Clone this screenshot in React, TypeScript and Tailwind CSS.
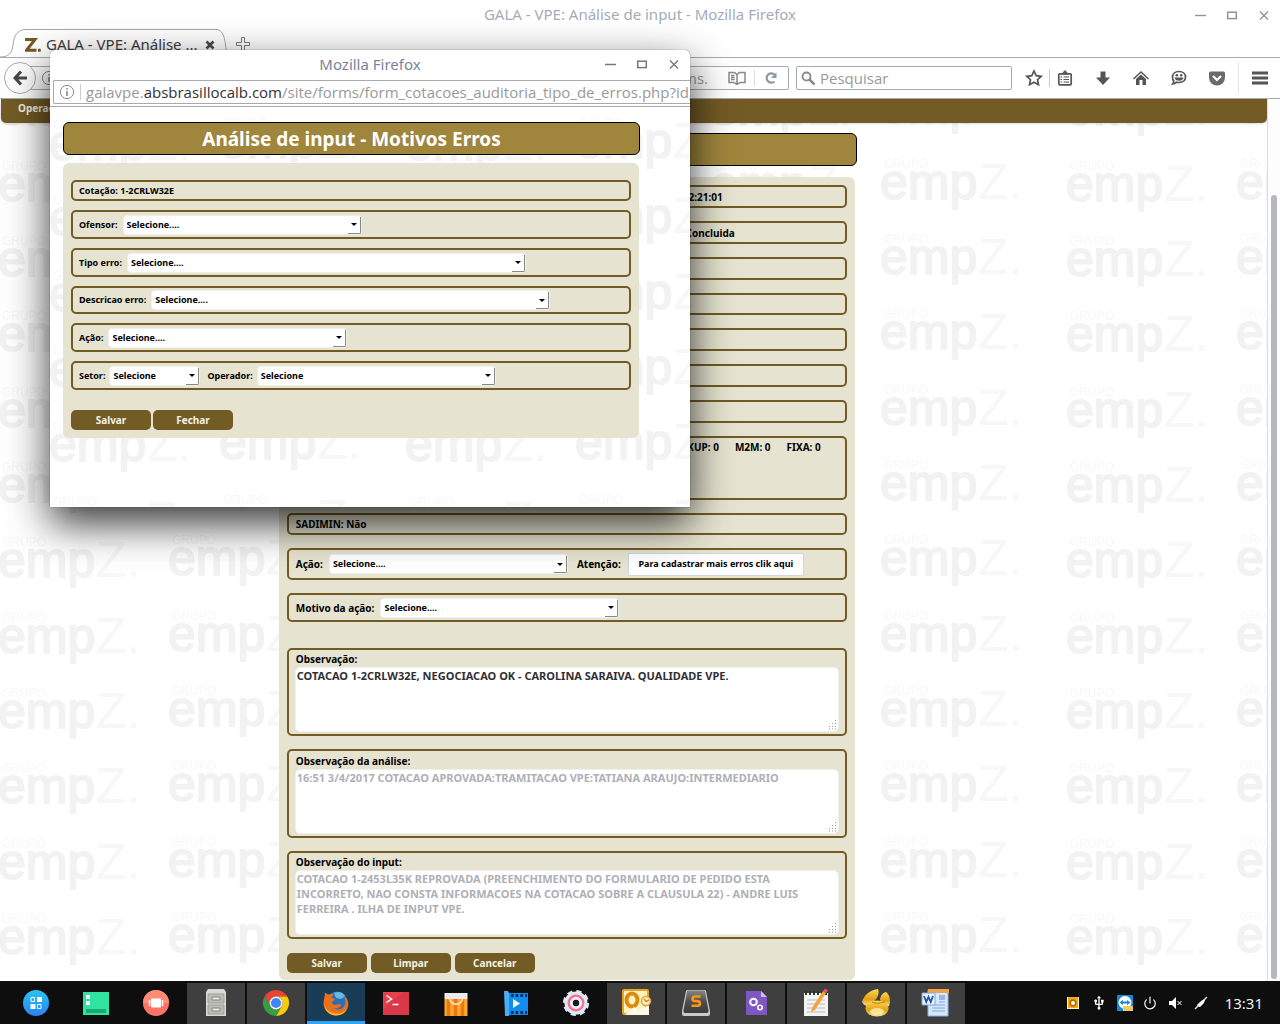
import React, { useId } from "react";
import { MdUsb } from "react-icons/md";
import { Power } from "lucide-react";

function Watermark({ x, y }: { x: number; y: number }) {
  const id = useId();
  const rows = [0, 75, 151];
  const logo = (lx: number, ly: number, key: string) => (
    <g key={key} transform={`translate(${lx} ${ly})`}>
      <text x="3" y="18" fontSize="12" fill="#f7f7f7">GRUPO</text>
      <text x="-1" y="49" fontSize="50" fill="#f2f2f2" stroke="#f2f2f2" strokeWidth="2">emp</text>
      <text x="97" y="49" fontSize="50" fill="#f7f7f7">Z.</text>
    </g>
  );
  return (
    <svg className="absolute inset-0 h-full w-full font-['Liberation_Sans',sans-serif]" aria-hidden="true">
      <defs>
        <pattern id={id} x={x} y={y} width="356" height="226" patternUnits="userSpaceOnUse">
          {rows.map((r) => [logo(11, r, "a" + r), logo(197, r + 2, "b" + r)])}
        </pattern>
      </defs>
      <rect width="100%" height="100%" fill={`url(#${id})`} />
    </svg>
  );
}

function WindowButtons({ tone }: { tone: string }) {
  return (
    <div className={`flex shrink-0 items-center gap-4 ${tone}`}>
      <button aria-label="Minimizar" className="h-4 w-4">
        <svg viewBox="0 0 16 16" className="h-4 w-4"><path d="M3 8.5h11" stroke="currentColor" strokeWidth="1.4" /></svg>
      </button>
      <button aria-label="Maximizar" className="h-4 w-4">
        <svg viewBox="0 0 16 16" className="h-4 w-4"><rect x="3.7" y="5.2" width="8.6" height="6.4" fill="none" stroke="currentColor" strokeWidth="1.5" /></svg>
      </button>
      <button aria-label="Fechar janela" className="h-4 w-4">
        <svg viewBox="0 0 16 16" className="h-4 w-4"><path d="M4 4.5l8 8M12 4.5l-8 8" stroke="currentColor" strokeWidth="1.4" /></svg>
      </button>
    </div>
  );
}

function InfoIcon() {
  return (
    <svg viewBox="0 0 16 16" className="h-4 w-4 shrink-0 text-[#8a8a8a]">
      <circle cx="8" cy="8" r="6.6" fill="none" stroke="currentColor" />
      <path d="M8 7v5M8 4v1.6" stroke="currentColor" strokeWidth="1.6" />
    </svg>
  );
}

function SelectField({ label, value, width, gap }: { label: string; value: string; width: string; gap: string }) {
  const id = useId();
  return (
    <div className={`flex items-center ${gap}`}>
      <label htmlFor={id}>{label}</label>
      <div className={`relative ${width}`}>
        <select id={id} className="h-5 w-full appearance-none rounded-[4px] border border-[#f0f0f0] bg-white pr-4 pl-[3px] text-[9px] leading-4 font-bold">
          <option>{value}</option>
        </select>
        <span className="pointer-events-none absolute right-[1px] bottom-[1px] flex h-[17px] w-[13px] items-center justify-center rounded-br-[2px] border-r border-b border-[#888]">
          <span className="border-x-[3px] border-t-[3px] border-x-transparent border-t-black" />
        </span>
      </div>
    </div>
  );
}

function Row({ height, className = "", children }: { height: string; className?: string; children?: React.ReactNode }) {
  return <div className={`flex rounded-[5px] border-2 border-[#735b25] ${height} ${className}`}>{children}</div>;
}

function NoteField({ label, text, height, disabled = false }: { label: string; text: string; height: string; disabled?: boolean }) {
  const id = useId();
  return (
    <Row height={height} className="flex-col justify-end px-[6px] pb-[2px]">
      <label htmlFor={id} className="h-[15px] pl-px leading-[15px]">{label}</label>
      <div className="relative h-[65px]">
        <textarea
          id={id}
          disabled={disabled}
          defaultValue={text}
          className="h-full w-full resize-none overflow-hidden rounded-[5px] border border-[#f0f0ee] bg-white pl-[1px] text-[11px] leading-[15px] font-bold text-[#303036] disabled:text-[#aeb0b6]"
        />
        <svg viewBox="0 0 10 10" className="pointer-events-none absolute right-[2px] bottom-[2px] h-[10px] w-[10px] text-[#999]">
          <path d="M8 .5h1M8 3.5h1M5 3.5h1M8 6.5h1M5 6.5h1M2 6.5h1M8 9h1M5 9h1M2 9h1M-1 9h1" stroke="currentColor" />
        </svg>
      </div>
    </Row>
  );
}

function ActionButton({ children }: { children: React.ReactNode }) {
  return <button className="h-5 w-20 rounded-[5px] bg-[#735b25] text-[10px] font-bold text-[#f4f2e6]">{children}</button>;
}

function BrowserChrome() {
  return (
    <header className="shrink-0 bg-white">
      <div className="flex h-[29px] items-center pr-2">
        <div className="w-[80px]" />
        <h1 className="flex-1 pl-2 text-center text-[15px] text-[#a5abb9]">GALA - VPE: Análise de input - Mozilla Firefox</h1>
        <WindowButtons tone="text-[#949494]" />
      </div>
      <div className="flex h-7 items-stretch">
        <svg viewBox="0 0 26 28" className="h-7 w-[26px] shrink-0" fill="none" stroke="#a3a7ab"><path d="M0 28c9 0 12-4 13-12 1-9 4-15.5 13-15.5" /></svg>
        <div className="-ml-px flex w-[191px] items-center border-t border-[#a3a7ab] pt-[2px]">
          <svg viewBox="0 0 16 14" className="h-[14px] w-4 shrink-0" fill="none" stroke="#735b25" strokeWidth="3"><path d="M0 1.5h10L1.500 12.300H11.500M13 12.300h2.800" /></svg>
          <span className="flex-1 pl-[5px] text-[15px] whitespace-nowrap text-[#3c3c3c]">GALA - VPE: Análise ...</span>
          <button aria-label="Fechar aba" className="h-3 w-3">
            <svg viewBox="0 0 12 12" className="h-3 w-3"><path d="M2.5 2.5l7 7M9.5 2.5l-7 7" stroke="#4a4a4a" strokeWidth="2.6" /></svg>
          </button>
        </div>
        <svg viewBox="0 0 16 28" className="h-7 w-4 shrink-0" fill="none" stroke="#a3a7ab"><path d="M0 .5c6 0 8.500 6 9.500 15.500 .8 8 3 12 6.500 12" /></svg>
        <button aria-label="Nova aba" className="ml-[3px] flex w-6 items-center pt-[2px]">
          <svg viewBox="0 0 16 16" className="h-4 w-4"><path d="M6.500 1.500h3v5h5v3h-5v5h-3v-5h-5v-3h5z" fill="#fff" stroke="#777" /></svg>
        </button>
      </div>
      <div className="flex h-[42px] items-center border-y border-[#a8abae] pr-[10px] pl-1">
        <button aria-label="Voltar" className="z-[1] flex h-8 w-8 shrink-0 items-center justify-center rounded-full border border-[#a8abae] bg-white">
          <svg viewBox="0 0 16 16" className="h-4 w-4" fill="none" stroke="#4a4a4a" strokeWidth="3"><path d="M9 1.500L3 8l6 6.500M3 8h12" /></svg>
        </button>
        <div className="-ml-2 flex h-6 flex-1 items-center rounded-r-[2px] border border-[#a8abae] pr-[9px] pl-3">
          <InfoIcon />
          <input aria-label="Endereço" readOnly value="galavpe.absbrasillocalb.com/site/forms." className="min-w-0 flex-1 pr-5 text-right font-['Open_Sans',sans-serif] text-[15px] text-[#999]" />
          <svg viewBox="0 0 18 14" className="h-[14px] w-[18px]" fill="none" stroke="#888" strokeWidth="1.500"><path d="M1 1.500h5.500l2.500 2 2.500-2H17v10h-5l-3 2-3-2H1zM9 3.500v9M3 4.500h3.500M3 6.500h3.500M3 8.500h3.500" /></svg>
          <span className="mx-2 h-4 w-px bg-[#ddd]" />
          <button aria-label="Recarregar" className="h-4 w-4">
            <svg viewBox="0 0 16 16" className="h-4 w-4" fill="none" stroke="#8c98a5" strokeWidth="2.200"><path d="M11.500 11.500A4.700 4.700 0 1 1 12 5" /><path d="M13.500 2.500v5.500H8z" fill="#8c98a5" stroke="none" /></svg>
          </button>
        </div>
        <div className="ml-[7px] flex h-6 w-[216px] items-center rounded-[2px] border border-[#a8abae] pl-1">
          <svg viewBox="0 0 15 15" className="h-[15px] w-[15px]" fill="none" stroke="#8a8a8a"><circle cx="5.500" cy="5.500" r="4" strokeWidth="1.800" /><path d="M8.500 8.500l5 5" strokeWidth="2.500" /></svg>
          <input aria-label="Pesquisar" placeholder="Pesquisar" className="min-w-0 flex-1 pl-1 font-['Open_Sans',sans-serif] text-[15px] placeholder:text-[#999]" />
        </div>
        <nav aria-label="Ferramentas" className="ml-3 flex items-center text-[#555]">
          <button aria-label="Favoritos" className="h-5 w-5">
            <svg viewBox="0 0 20 20" className="h-5 w-5"><path d="M10 3l2.200 4.700 5 .6-3.700 3.400 1 5L10 14.300 5.500 16.700l1-5L2.800 8.300l5-.6z" fill="none" stroke="currentColor" strokeWidth="1.700" /></svg>
          </button>
          <span className="mx-[5px] h-[18px] w-px bg-[#ccc]" />
          <button aria-label="Biblioteca" className="h-5 w-5">
            <svg viewBox="0 0 20 20" className="h-5 w-5"><rect x="3.800" y="5.800" width="12.400" height="11" rx="1" fill="none" stroke="currentColor" strokeWidth="1.700" /><path d="M7 6l3-3.500L13 6z" fill="currentColor" stroke="currentColor" /><path d="M5.500 9h1.500M8.500 9H14M5.500 11.500h1.500M8.500 11.500H14M5.500 14h1.500M8.500 14H14" stroke="currentColor" strokeWidth="1.200" /></svg>
          </button>
          <button aria-label="Downloads" className="ml-[18px] h-5 w-5">
            <svg viewBox="0 0 20 20" className="h-5 w-5"><path d="M7.500 3.500h5v6H17l-7 7.500-7-7.500h4.500z" fill="currentColor" /></svg>
          </button>
          <button aria-label="Início" className="ml-[18px] h-5 w-5">
            <svg viewBox="0 0 20 20" className="h-5 w-5"><path d="M2.500 11L10 4l7.500 7" fill="none" stroke="currentColor" strokeWidth="1.500" /><path d="M5 11l5-4.500 5 4.500v6h-3.500v-5h-3v5H5z" fill="currentColor" /></svg>
          </button>
          <button aria-label="Chat" className="ml-[18px] h-5 w-5">
            <svg viewBox="0 0 20 20" className="h-5 w-5"><path d="M10 3.500c4 0 6.500 2.300 6.500 5.500s-2.500 5.500-6.500 5.500c-.9 0-1.700-.1-2.400-.3-1.200 1.200-2.500 1.800-4 1.800.8-.9 1.200-1.700 1.200-2.900-.9-1-1.300-2.300-1.300-4.100 0-3.200 2.500-5.500 6.500-5.500z" fill="none" stroke="currentColor" strokeWidth="1.700" /><path d="M5.500 9.500h9c-.3 2-2 3.300-4.500 3.300s-4.200-1.300-4.500-3.300z" fill="currentColor" /><circle cx="7.800" cy="7.200" r="1.300" fill="currentColor" /><circle cx="12.200" cy="7.200" r="1.300" fill="currentColor" /></svg>
          </button>
          <button aria-label="Pocket" className="ml-[18px] h-5 w-5">
            <svg viewBox="0 0 20 20" className="h-5 w-5"><path d="M3.500 3.500h13A1.500 1.500 0 0 1 18 5v4.500a8 8 0 0 1-16 0V5a1.500 1.500 0 0 1 1.500-1.500z" fill="#6b6b6b" /><path d="M6 8l4 4 4-4" fill="none" stroke="#fff" strokeWidth="2.200" /></svg>
          </button>
          <span className="ml-[11px] h-8 w-px bg-[#e5e5e5]" />
          <button aria-label="Menu" className="ml-[11px] h-5 w-5">
            <svg viewBox="0 0 20 20" className="h-5 w-5"><path d="M2 5h16M2 10h16M2 15h16" stroke="currentColor" strokeWidth="2.800" /></svg>
          </button>
        </nav>
      </div>
    </header>
  );
}

function MainPage() {
  return (
    <main className="flex min-h-0 flex-1 bg-white">
      <div className="relative flex-1 overflow-hidden">
        <Watermark x={158} y={126} />
        <div className="relative text-[10px] leading-[14px] font-bold text-black">
          <nav className="ml-px flex h-6 items-center rounded-b-[5px] bg-[#735b25] px-[17px] pb-[6px] shadow">
            <a href="#operacoes" className="text-[#f1eedd]">Operações</a>
          </nav>
          <div className="ml-[22%] w-[576px]">
            <div className="mt-[10px] ml-[2px] -mr-[2px] h-[33px] rounded-[6px] border border-black bg-[#a0863c]" />
            <form className="mt-[11px] flex flex-col gap-[13px] rounded-[6px] bg-[#e6e3d0] px-2 pt-2 pb-[7px]" onSubmit={(e) => e.preventDefault()}>
              <Row height="h-[23px]" className="items-center justify-end pr-[122px]">12:21:01</Row>
              <Row height="h-[23px]" className="items-center justify-end pr-[110px]">Concluida</Row>
              <Row height="h-[23px]" />
              <Row height="h-[22px]" />
              <Row height="h-[23px]" />
              <Row height="h-[23px]" />
              <Row height="h-[23px]" />
              <Row height="h-16" className="justify-end gap-4 pt-[2px] pr-6">
                <span>BACKUP: 0</span>
                <span>M2M: 0</span>
                <span>FIXA: 0</span>
              </Row>
              <Row height="h-[22px]" className="items-center pl-[7px]">SADIMIN: Não</Row>
              <Row height="h-8" className="items-center pl-[7px]">
                <SelectField label="Ação:" value="Selecione...." width="w-[239px]" gap="gap-[6px]" />
                <span className="ml-[9px]">Atenção:</span>
                <button className="ml-[7px] h-[23px] w-44 rounded-[2px] border border-[#cdd5e6] bg-white text-[9px]">Para cadastrar mais erros clik aqui</button>
              </Row>
              <Row height="h-[29px]" className="mb-[13px] items-center pl-[7px]">
                <SelectField label="Motivo da ação:" value="Selecione...." width="w-[239px]" gap="gap-[6px]" />
              </Row>
              <NoteField height="h-[88px]" label="Observação:" text="COTACAO 1-2CRLW32E, NEGOCIACAO OK - CAROLINA SARAIVA. QUALIDADE VPE." />
              <NoteField height="h-[89px]" label="Observação da análise:" disabled text="16:51 3/4/2017 COTACAO APROVADA:TRAMITACAO VPE:TATIANA ARAUJO:INTERMEDIARIO" />
              <NoteField height="h-[88px]" label="Observação do input:" disabled text="COTACAO 1-2453L35K REPROVADA (PREENCHIMENTO DO FORMULARIO DE PEDIDO ESTA INCORRETO, NAO CONSTA INFORMACOES NA COTACAO SOBRE A CLAUSULA 22) - ANDRE LUIS FERREIRA . ILHA DE INPUT VPE." />
              <div className="mt-px flex gap-1">
                <ActionButton>Salvar</ActionButton>
                <ActionButton>Limpar</ActionButton>
                <ActionButton>Cancelar</ActionButton>
              </div>
            </form>
          </div>
        </div>
      </div>
      <div className="flex w-[13px] shrink-0 justify-center border-l border-[#dcdcdc] bg-[#fdfdfd] pt-24 pb-[2px]">
        <div className="w-[6px] rounded-full bg-[#b7b8be]" />
      </div>
    </main>
  );
}

function Popup() {
  return (
    <section
      role="dialog"
      aria-label="Mozilla Firefox"
      className="absolute top-[50px] left-[50px] z-10 flex h-[457px] w-[640px] flex-col overflow-hidden rounded-t-[5px] bg-white shadow-[0_0_1px_rgba(0,0,0,0.7),0_16px_42px_rgba(0,0,0,0.8)]"
    >
      <div className="flex h-[30px] shrink-0 items-center pr-2 pb-[2px]">
        <div className="w-[88px]" />
        <h2 className="flex-1 text-center text-[15px] text-[#7a8398]">Mozilla Firefox</h2>
        <WindowButtons tone="text-[#777]" />
      </div>
      <div className="h-[27px] shrink-0 border-b border-[#a8abae] pl-[3px]">
        <div className="flex h-6 items-center overflow-hidden rounded-l-[2px] border border-r-0 border-[#a8abae] pl-[5px]">
          <InfoIcon />
          <span className="mx-[5px] h-4 w-px shrink-0 bg-[#ccc]" />
          <div role="textbox" aria-readonly="true" aria-label="Endereço" className="font-['Open_Sans',sans-serif] text-[15px] whitespace-nowrap text-[#999]">
            galavpe.<span className="text-[#333]">absbrasillocalb.com</span>/site/forms/form_cotacoes_auditoria_tipo_de_erros.php?id_
          </div>
        </div>
      </div>
      <div className="relative flex-1 overflow-hidden">
        <Watermark x={159} y={2} />
        <div className="relative px-[13px] pt-[15px] text-[9px] leading-[14px] font-bold text-black">
          <h3 className="flex h-[33px] w-[577px] items-center justify-center rounded-[6px] border border-black bg-[#a0863c] text-[19px] text-white">
            Análise de input - Motivos Erros
          </h3>
          <form className="mt-2 flex w-[576px] flex-col gap-[9px] rounded-[6px] bg-[#e6e3d0] px-2 pt-[17px] pb-2" onSubmit={(e) => e.preventDefault()}>
            <Row height="h-[21px]" className="items-center pl-[6px]">Cotação: 1-2CRLW32E</Row>
            <Row height="h-[29px]" className="items-center pl-[6px]">
              <SelectField label="Ofensor:" value="Selecione...." width="w-[239px]" gap="gap-[5px]" />
            </Row>
            <Row height="h-[29px]" className="items-center pl-[6px]">
              <SelectField label="Tipo erro:" value="Selecione...." width="w-[399px]" gap="gap-[5px]" />
            </Row>
            <Row height="h-[28px]" className="items-center pl-[6px]">
              <SelectField label="Descricao erro:" value="Selecione...." width="w-[399px]" gap="gap-[5px]" />
            </Row>
            <Row height="h-[29px]" className="items-center pl-[6px]">
              <SelectField label="Ação:" value="Selecione...." width="w-[239px]" gap="gap-[5px]" />
            </Row>
            <Row height="h-[29px]" className="items-center gap-[7px] pl-[6px]">
              <SelectField label="Setor:" value="Selecione" width="w-[91px]" gap="gap-[4px]" />
              <SelectField label="Operador:" value="Selecione" width="w-[239px]" gap="gap-[4px]" />
            </Row>
            <div className="mt-[11px] flex gap-[2px]">
              <ActionButton>Salvar</ActionButton>
              <ActionButton>Fechar</ActionButton>
            </div>
          </form>
        </div>
      </div>
    </section>
  );
}

const chromeSlice = "M1.740 6.500A13 13 0 0 1 24.260 6.500H13A6.500 6.500 0 0 0 7.370 16.250Z";

const apps: { name: string; state: "idle" | "open" | "active"; icon: React.ReactNode }[] = [
  {
    name: "Menu de aplicativos", state: "idle", icon: (
      <><defs><linearGradient id="launcher" x2="0" y2="1"><stop stopColor="#25c5f7" /><stop offset="1" stopColor="#2a82f5" /></linearGradient></defs>
        <circle cx="14" cy="14" r="13" fill="url(#launcher)" /><path d="M15 8h5v5h-5zM8.500 15h5v5h-5z" fill="#fff" /><path d="M9 8.500h3.500v4H9zM15.500 15.500h3.500v4h-3.500z" fill="none" stroke="#fff" /></>),
  },
  { name: "Áreas de trabalho", state: "idle", icon: (<><path d="M1 3h26v23H1z" fill="#2fe3a0" /><path d="M4 6h4v4H4zM4 12h4v4H4z" fill="#fff" /><path d="M4 20h20v4H4z" fill="#1cab6f" /></>) },
  { name: "Multitarefa", state: "idle", icon: (<><circle cx="14" cy="14" r="13" fill="#fd7266" /><path d="M1 14a13 13 0 0 1 26 0z" fill="#fe8b76" /><rect x="9" y="9.500" width="10" height="9" rx="1" fill="#fff" /><path d="M7.500 11v6M20.500 11v6" stroke="#fff" strokeWidth="1.500" /></>) },
  {
    name: "Gerenciador de arquivos", state: "open", icon: (
      <><path d="M4 3l2-3h16l2 3v24H4z" fill="#d8d8d4" /><path d="M6 5h16v9H6zM6 16h16v9H6z" fill="#bcbcb7" stroke="#a0a09a" /><path d="M10 8h8v3h-8zM10 19h8v3h-8z" fill="#e8e8e4" stroke="#888" /></>),
  },
  {
    name: "Chrome", state: "open", icon: (
      <g transform="translate(1 1)"><path d={chromeSlice} fill="#ea4335" /><path d={chromeSlice} fill="#fbcb0a" transform="rotate(120 13 13)" /><path d={chromeSlice} fill="#34a043" transform="rotate(240 13 13)" /><circle cx="13" cy="13" r="6.500" fill="#fff" /><circle cx="13" cy="13" r="5.100" fill="#4285f4" /></g>),
  },
  {
    name: "Firefox", state: "active", icon: (
      <><circle cx="15" cy="13" r="10.500" fill="#2a6fb8" /><path d="M12 4c4-2 9-1 11 3l-4 3-5-1z" fill="#69b9e6" /><path d="M3 3.500c1.500 1 2.500 2 4 2 2-.8 4-.7 5 .2-1.500.8-2.500 2-2.500 3.300l3.500.8c-.3 2-2.500 2-3 3.200 0 2.500 2.800 3.500 5 2.500 2-1 4-.5 4.500.5-2 3-5 4-8 3 4 3 10 1.500 11.500-3.500 1-3.500 0-6-1-8.500 3 2 4.500 5 4.300 8.500C26 22 20.500 26.500 14 26.500 7 26.500 1.500 21 1.500 14.500c0-4 1.500-7 1.500-11z" fill="#e8711a" /><path d="M2.500 15c1 6 6 9.500 12 9.500 5 0 9-2 11-6-1.500 5-6 8-11.500 8C7.500 26.500 2.500 21.500 2.500 15z" fill="#f6b52d" /></>),
  },
  { name: "Terminal", state: "idle", icon: (<><path d="M1 3h26v23H1z" fill="#e5404b" /><path d="M1 21L21 3h6v23H1z" fill="#d93848" /><path d="M4.500 6.500l5 3.500-5 3.500M10.500 15.500h6" fill="none" stroke="#fff" strokeWidth="1.500" /></>) },
  { name: "Loja", state: "idle", icon: (<><path d="M2.500 4h23v6h-23z" fill="#ededed" /><path d="M2.500 10h23v17h-23z" fill="#ffa733" /><path d="M6.500 10v17M13.500 10v17M20.500 10v17" stroke="#ed7711" strokeWidth="3.500" /><path d="M7 7c0 11 14 11 14 0" fill="none" stroke="#ffe5c9" strokeWidth="1.500" /></>) },
  { name: "Filmes", state: "idle", icon: (<><path d="M5 4h21v22H5z" fill="#118df0" /><path d="M2 2h4l1 2v23H3z" fill="#48aef8" /><path d="M9 6.500h16M9 23.500h16" stroke="#082b55" strokeWidth="3" strokeDasharray="2.500 2.200" /><path d="M11 10l7 4.500-7 4.500z" fill="#fff" /></>) },
  {
    name: "Configurações", state: "idle", icon: (
      <><circle cx="14" cy="14" r="11.500" fill="#dce9f8" /><circle cx="14" cy="14" r="11.800" fill="none" stroke="#dce9f8" strokeWidth="2.600" strokeDasharray="5.270 4" /><circle cx="14" cy="14" r="7.300" fill="#e8f1fb" stroke="#fb7085" strokeWidth="2.300" /><circle cx="14" cy="14" r="3.200" fill="#181818" /></>),
  },
  {
    name: "Outlook", state: "open", icon: (
      <><rect x="0" y="0" width="27" height="26" rx="2" fill="#e9a520" /><path d="M2 2h23v13l-8 9H2z" fill="#fff2bc" /><ellipse cx="10" cy="11" rx="5.500" ry="6.500" fill="none" stroke="#dc8a10" strokeWidth="4" /><path d="M3 26l9-8 4 3 11-5v10z" fill="#fff8e8" /><circle cx="24" cy="12" r="4.500" fill="#fff3d3" stroke="#e6a12a" strokeWidth="1.500" /><path d="M22 10l2 2.500 3-1.500" fill="none" stroke="#d08c2c" strokeWidth="1.500" /></>),
  },
  {
    name: "Sublime Text", state: "open", icon: (
      <><defs><linearGradient id="keycap" x2="0" y2="1"><stop stopColor="#858585" /><stop offset="0.5" stopColor="#4d4d4d" /><stop offset="1" stopColor="#3c3c3c" /></linearGradient></defs>
        <path d="M4 2q.3-1 2-1h16q1.700 0 2 1l4 20v3q0 2-2 2H2q-2 0-2-2v-3z" fill="#c9c9c9" /><path d="M5 2.500q.2-1 1.500-1h15q1.300 0 1.500 1l3.500 19q.3 2.500-2 2.500h-21q-2.300 0-2-2.500z" fill="url(#keycap)" /><path d="M18.500 7.500h-5q-3 0-3 2.300t3 2.300h1.500q3 0 3 2.300t-3 2.300h-5.500" fill="none" stroke="#ff9518" strokeWidth="2.600" /></>),
  },
  { name: "Scripts", state: "open", icon: (<><path d="M4 2h15l6 6v18H4z" fill="#7e57c2" /><path d="M19 2l6 6h-6z" fill="#d1c0ec" /><circle cx="11.500" cy="13" r="3.300" fill="none" stroke="#fff" strokeWidth="2" /><circle cx="18" cy="18.500" r="2.200" fill="none" stroke="#fff" strokeWidth="1.600" /></>) },
  { name: "Editor de texto", state: "open", icon: (<><path d="M2 4h24v23H2z" fill="#f4f4f2" /><path d="M3 4h22" stroke="#333" strokeWidth="4" strokeDasharray="2 2" /><path d="M5 11h18M5 15h18M5 19h18M5 23h18" stroke="#bbb" /><path d="M10 19l11-17 3 2-11 17-4 2z" fill="#f3a53a" /><path d="M21 2l2-2.500 3 2L24 4z" fill="#dd5563" /></>) },
  {
    name: "Navicat", state: "open", icon: (
      <><defs><linearGradient id="gold" x2="0" y2="1"><stop stopColor="#fbd95c" /><stop offset="0.600" stopColor="#e3a010" /><stop offset="1" stopColor="#fbe68e" /></linearGradient></defs>
        <path d="M0 13C2 6 8 1 16 0c2 5-1 10-5 13-1 3-3 4-5 4-3 0-5-2-6-4z" fill="url(#gold)" /><path d="M18 11c0-3 2-7 6-8 4 3 5 9 3 14-2 1-5 0-9-6z" fill="url(#gold)" /><ellipse cx="15" cy="19.500" rx="11.500" ry="8" fill="url(#gold)" /><path d="M10 13c4 2 9 1 13 0" fill="none" stroke="#b57a08" /><ellipse cx="15" cy="22.500" rx="7" ry="3.500" fill="#fdf0b4" opacity="0.800" /></>),
  },
  { name: "Writer", state: "open", icon: (<><path d="M6 1h20v26H6z" fill="#d6e7fa" stroke="#8bb4e3" /><path d="M6 0h21v4H6z" fill="#f0a44a" /><path d="M10 16h13M10 19h13M10 22h13M17 13h6" stroke="#7fa9de" /><path d="M17 6h6v5h-6z" fill="#94b9e4" /><path d="M0 4h13v12H0z" fill="#edf4fd" stroke="#7ea6d9" /><path d="M2 7l2.200 6L6.500 8l2.300 5L11 7" fill="none" stroke="#1d56aa" strokeWidth="1.800" /></>) },
];

const appStyles = {
  idle: "border-transparent",
  open: "border-transparent bg-[#3f3f3f]",
  active: "border-[#2ca7f8] bg-[#1a3d57]",
};

function Taskbar() {
  return (
    <footer className="flex h-[43px] shrink-0 items-center justify-between bg-[#0e0e0e] pt-px">
      <div className="flex gap-[2px] pl-[7px]">
        {apps.map((app) => (
          <button key={app.name} aria-label={app.name} className={`flex h-[41px] w-[58px] items-center justify-center border-b-[3px] pt-[3px] ${appStyles[app.state]}`}>
            <svg viewBox="0 0 28 28" className="h-7 w-7 overflow-visible">{app.icon}</svg>
          </button>
        ))}
      </div>
      <div className="flex items-center gap-[10px] pr-[17px] text-white">
        <svg viewBox="0 0 16 16" className="h-4 w-4"><path d="M2 2h12v12H2z" fill="#fff3c8" /><path d="M3 2h10v11H3z" fill="#f1a915" /><circle cx="8" cy="8" r="2.800" fill="#fff" stroke="#b86a05" strokeWidth="1.700" /></svg>
        <MdUsb className="h-4 w-4" />
        <svg viewBox="0 0 16 16" className="h-4 w-4"><rect width="16" height="16" rx="1" fill="#1787d8" /><circle cx="8" cy="7.500" r="6.500" fill="#fff" /><path d="M2.500 7.500L6 5v1.500h4V5l3.500 2.500L10 10V8.500H6V10z" fill="#1787d8" /><path d="M6 11h10v5H6z" fill="#e9cd62" /></svg>
        <Power className="h-[14px] w-[14px]" strokeWidth={2} />
        <svg viewBox="0 0 16 16" className="h-4 w-4"><path d="M2 6h3l4-4v12l-4-4H2z" fill="#fff" /><path d="M10.500 6l4 4M14.500 6l-4 4" stroke="#fff" /></svg>
        <svg viewBox="0 0 16 16" className="h-4 w-4"><path d="M2 14l4-4M10 6l4-4" stroke="#ddd" strokeWidth="1.500" /><path d="M4.500 10L8 6.500l3-1.500.5.500-1.500 3L6.500 12z" fill="#fff" stroke="#fff" /></svg>
        <time className="ml-[6px] text-[15px] leading-5 text-[#eee]">13:31</time>
      </div>
    </footer>
  );
}

export default function App() {
  return (
    <div className="relative flex h-screen flex-col overflow-hidden bg-white font-['Noto_Sans',sans-serif]">
      <BrowserChrome />
      <MainPage />
      <Popup />
      <Taskbar />
    </div>
  );
}
